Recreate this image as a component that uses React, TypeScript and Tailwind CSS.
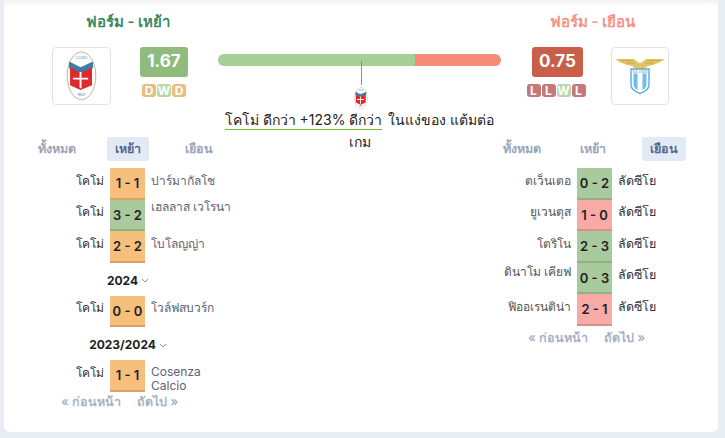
const FONT = "font-['Inter','Noto_Sans',sans-serif]"

type Match = { home: string; score: string; away: string; color: 'draw' | 'win' | 'loss'; raised?: boolean; awayClass?: string }

const scoreColors = {
  draw: 'bg-[#f6c07c] border-[#d4a46b]',
  win: 'bg-[#a9ca9c] border-[#8fb184]',
  loss: 'bg-[#f7aaa6] border-[#d68f8b]',
}

const pillColors = {
  D: 'bg-[#e9bd81]',
  W: 'bg-[#b9d6aa]',
  L: 'bg-[#c57a78]',
}

function ComoLogo({ width }: { width: number }) {
  return (
    <svg width={width} height={width * 1.6} viewBox="0 0 32 52">
      <ellipse cx="16" cy="26" rx="15" ry="25" fill="#fff" stroke="#b9996b" strokeWidth="0.8" />
      <text x="16" y="8.5" textAnchor="middle" fontSize="4" fill="#5a9bc9">COMO</text>
      <path d="M3 11 L15 17 L28 11 V18 L15 24 L3 18 Z" fill="#3f7ba6" />
      <path d="M4 17 L15 23 L27 17 V36 L15 41 L4 36 Z" fill="#de2a2a" />
      <path d="M14 22 H16 V28 H23 V30 H16 V39 H14 V30 H7 V28 H14 Z" fill="#fff" />
      <text x="16" y="47.5" textAnchor="middle" fontSize="4" fill="#5a7ba0">1907</text>
    </svg>
  )
}

function LazioLogo() {
  return (
    <svg width="50" height="36" viewBox="0 0 50 36">
      <path d="M0 1 H19 L24 5 L26 5 L31 1 H50 C46 4 40 7 33 8 L29 11 H21 L17 8 C10 7 4 4 0 1 Z" fill="#e3c463" />
      <path d="M5 2.5 H18 M32 2.5 H45 M11 5 H20 M30 5 H39" stroke="#b99a3f" strokeWidth="0.6" />
      <path d="M16 11 H34 V27 C34 31 29 34 25 35.5 C21 34 16 31 16 27 Z" fill="#fff" stroke="#55aee0" strokeWidth="1.4" />
      <path d="M18.5 15.5 H22.5 V32 C20 31 18.5 29 18.5 26 Z M27.5 15.5 H31.5 V26 C31.5 29 30 31 27.5 32 Z" fill="#6cc0ec" />
      <text x="25" y="14.5" textAnchor="middle" fontSize="3" fill="#3f6f92">S.S. LAZIO</text>
    </svg>
  )
}

function Pills({ items, wide }: { items: ('D' | 'W' | 'L')[]; wide?: boolean }) {
  return (
    <div className={`mt-[7px] flex justify-center gap-[1px] ${wide ? '-ml-[6px] -mr-[3px]' : ''}`}>
      {items.map((item, i) => (
        <span
          key={i}
          className={`flex h-[13px] w-[14px] items-center justify-center rounded-[3px] text-[12px] font-bold leading-none text-white ${pillColors[item]}`}
        >
          {item}
        </span>
      ))}
    </div>
  )
}

function Tabs({ active }: { active: number }) {
  return (
    <div className="grid grid-cols-3 text-[12.5px] font-semibold text-[#9aa5b8]">
      {['ทั้งหมด', 'เหย้า', 'เยือน'].map((label, i) => (
        <div key={label} className="flex justify-center">
          <span className={`flex h-6 items-center rounded-[3px] px-2 ${i === active ? 'bg-[#e3eaf5] text-[#53688f]' : ''}`}>
            {label}
          </span>
        </div>
      ))}
    </div>
  )
}

function Row({ m, homeWidth, boldAway }: { m: Match; homeWidth: string; boldAway?: boolean }) {
  const homeTop = boldAway && m.raised ? 'top-[-6px]' : 'top-[-3px]'
  const awayTop = m.awayClass ?? (!boldAway && m.raised ? 'top-[-8px]' : 'top-[-3px]')
  return (
    <div className="flex h-[31.5px] items-stretch">
      <div className={`flex shrink-0 items-center justify-end pr-[6px] text-right text-[12px] ${homeWidth} ${boldAway ? 'font-normal text-[#555]' : 'font-medium text-[#333]'}`}>
        <span className={`relative whitespace-nowrap ${homeTop}`}>{m.home}</span>
      </div>
      <div className={`flex w-[35px] shrink-0 items-center justify-center border-b-2 pt-[2px] text-[13px] font-semibold text-[#222] ${scoreColors[m.color]}`}>
        {m.score}
      </div>
      <div className={`flex w-[76px] shrink-0 items-center pl-[6px] leading-[14px] ${boldAway ? 'text-[12.5px] font-medium text-[#333]' : 'text-[12px] text-[#5d6473]'}`}>
        <span className={`relative ${m.raised ? 'whitespace-nowrap' : ''} ${awayTop}`}>{m.away}</span>
      </div>
    </div>
  )
}

function Year({ label }: { label: string }) {
  return (
    <div className="flex h-[33px] items-center justify-center pl-[34px] pt-[3px] text-[12px] font-bold text-[#222]">
      {label}
      <svg className="ml-[3px]" width="8" height="5" viewBox="0 0 8 5" fill="none">
        <path d="M1 1 L4 4 L7 1" stroke="#8b93a1" strokeWidth="1" />
      </svg>
    </div>
  )
}

function Pager() {
  return (
    <div className="flex gap-[16px] text-[12.5px] font-semibold text-[#a7b2c4]">
      <span>« ก่อนหน้า</span>
      <span>ถัดไป »</span>
    </div>
  )
}

const homeMatches: Match[] = [
  { home: 'โคโม่', score: '1 - 1', away: 'ปาร์มากัลโช', color: 'draw' },
  { home: 'โคโม่', score: '3 - 2', away: 'เฮลลาส เวโรนา', color: 'win', raised: true },
  { home: 'โคโม่', score: '2 - 2', away: 'โบโลญญ่า', color: 'draw' },
]

const awayMatches: Match[] = [
  { home: 'ตเว็นเตอ', score: '0 - 2', away: 'ลัดซีโย', color: 'win' },
  { home: 'ยูเวนตุส', score: '1 - 0', away: 'ลัดซีโย', color: 'loss' },
  { home: 'โตริโน', score: '2 - 3', away: 'ลัดซีโย', color: 'win' },
  { home: 'ดินาโม เคียฟ', score: '0 - 3', away: 'ลัดซีโย', color: 'win', raised: true },
  { home: 'ฟิออเรนติน่า', score: '2 - 1', away: 'ลัดซีโย', color: 'loss' },
]

export default function App() {
  return (
    <div className={`h-[438px] w-[725px] overflow-hidden bg-[#e9eef4] pl-[4px] ${FONT}`}>
      <div className="flex h-[432px] w-[714px] rounded-b-[6px] bg-white shadow-[inset_0_7px_6px_-5px_rgba(0,0,0,0.08)]">
        {/* home side */}
        <div className="w-[214px] shrink-0">
          <h3 className="mt-[13px] pl-[34px] text-center text-[15px] font-semibold leading-[18px] text-[#3b8a63]">ฟอร์ม - เหย้า</h3>
          <div className="mt-[16px] flex items-start pl-[48px]">
            <div className="flex h-[58px] w-[59px] items-center justify-center rounded-[4px] border border-[#e1e3ea]">
              <ComoLogo width={31} />
            </div>
            <div className="ml-[29px] w-[48px]">
              <div className="flex h-[30px] items-center justify-center rounded-[3px] bg-[#8fbb7c] text-[17px] font-bold text-white">1.67</div>
              <Pills items={['D', 'W', 'D']} />
            </div>
          </div>
          <div className="mt-[32px] ml-[17px] w-[213px]">
            <Tabs active={1} />
          </div>
          <div className="mt-[7px]">
            {homeMatches.map((m, i) => (
              <Row key={i} m={m} homeWidth="w-[106px]" />
            ))}
            <Year label="2024" />
            <Row m={{ home: 'โคโม่', score: '0 - 0', away: 'โวล์ฟสบวร์ก', color: 'draw' }} homeWidth="w-[106px]" />
            <Year label="2023/2024" />
            <Row m={{ home: 'โคโม่', score: '1 - 1', away: 'Cosenza Calcio', color: 'draw', awayClass: 'top-[3px]' }} homeWidth="w-[106px]" />
          </div>
          <div className="mt-[1px] pl-[57px]">
            <Pager />
          </div>
        </div>

        {/* comparison bar */}
        <div className="w-[283px] shrink-0 text-center">
          <div className="mt-[54px] flex h-[12px] overflow-hidden rounded-full">
            <div className="w-[197px] bg-[#a6cf94]" />
            <div className="flex-1 bg-[#f68c78]" />
          </div>
          <div className="relative ml-[143px] -mt-[5px] h-[24px] w-px bg-[#8f8f8f]" />
          <div className="mt-[2px] flex justify-center pl-[3px]">
            <ComoLogo width={14} />
          </div>
          <p className="text-[14px] leading-[22px] text-[#222]">
            <span className="mr-[2px] inline-block leading-[18px]">
              โคโม่ ดีกว่า +123% ดีกว่า
              <span className="block h-px bg-[#6fbb2c]" />
            </span>{' '}
            ในแง่ของ แต้มต่อ
            <br />
            เกม
          </p>
        </div>

        {/* away side */}
        <div className="min-w-0 flex-1">
          <h3 className="mt-[13px] pr-[34px] text-center text-[15px] font-semibold leading-[18px] text-[#f79288]">ฟอร์ม - เยือน</h3>
          <div className="mt-[16px] flex items-start pl-[31px]">
            <div className="w-[51px]">
              <div className="flex h-[30px] items-center justify-center rounded-[3px] bg-[#ca5f49] text-[17px] font-bold text-white">0.75</div>
              <Pills items={['L', 'L', 'W', 'L']} wide />
            </div>
            <div className="ml-[28px] flex h-[58px] w-[58px] items-center justify-center rounded-[4px] border border-[#e1e3ea]">
              <LazioLogo />
            </div>
          </div>
          <div className="mt-[32px] -ml-[15px] w-[214px]">
            <Tabs active={2} />
          </div>
          <div className="mt-[7px]">
            {awayMatches.map((m, i) => (
              <Row key={i} m={m} homeWidth="w-[76px]" boldAway />
            ))}
          </div>
          <div className="mt-[3px] pl-[27px]">
            <Pager />
          </div>
        </div>
      </div>
    </div>
  )
}
